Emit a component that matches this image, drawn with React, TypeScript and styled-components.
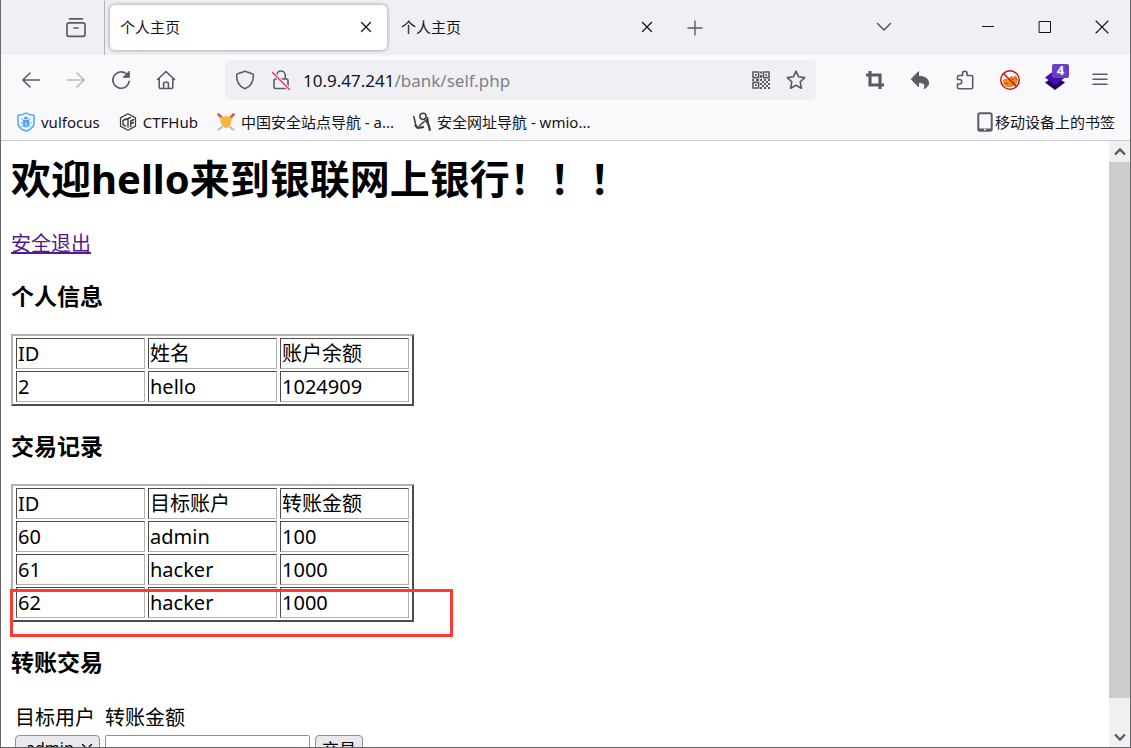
import React from "react";
import styled, { createGlobalStyle, css } from "styled-components";

const ink = "#15141a";
const iconInk = "#5b5b66";

const GlobalStyle = createGlobalStyle`
  *, *::before, *::after { box-sizing: border-box; }
  body { margin: 0; overflow: hidden; }
  body, button, input, select { font-family: "Noto Sans", "Noto Sans CJK SC", sans-serif; }
`;

const Window = styled.div`
  height: 100vh;
  display: flex;
  flex-direction: column;
  border: 1px solid #67676c;
  border-top: 0;
  background: #fff;
  color: ${ink};
`;

const TabBar = styled.header`
  flex: none;
  height: 55px;
  display: flex;
  background: #f0f0f4;
`;

const TabStart = styled.div`
  width: 104px;
  display: flex;
  align-items: center;
  justify-content: flex-end;
  padding-right: 17px;
  border-right: 1px solid #b3b3ba;
`;

const TabList = styled.div`
  display: flex;
  gap: 4px;
  padding: 5px;
`;

const Tab = styled.div<{ $active?: boolean }>`
  width: 277px;
  display: flex;
  align-items: center;
  justify-content: space-between;
  padding: 0 10px 2px;
  border-radius: 5px;
  font-size: 15px;
  line-height: 20px;
  ${(p) =>
    p.$active &&
    css`
      background: #fff;
      box-shadow: 0 0 4px rgba(0, 0, 0, 0.4);
    `}
`;

const IconButton = styled.button<{ $w?: number }>`
  flex: none;
  width: ${(p) => p.$w ?? 22}px;
  padding: 0;
  border: 0;
  background: none;
  color: ${iconInk};
  display: inline-flex;
  align-items: center;
  justify-content: center;
  position: relative;

  &:disabled { opacity: 0.4; }
`;

const CloseButton = styled(IconButton)`
  color: ${ink};
`;

const WindowControls = styled.div`
  margin-left: auto;
  padding-bottom: 2px;
  display: flex;
`;

const NavBar = styled.nav`
  flex: none;
  height: 50px;
  display: flex;
  align-items: center;
  background: #f9f9fb;
  padding: 0 8px 0 7px;
`;

const NavGroup = styled.div`
  display: flex;
  height: 40px;
`;

const AddressBar = styled.div`
  flex: 1;
  display: flex;
  align-items: center;
  height: 40px;
  margin: 0 36px 0 37px;
  padding: 0 3px 0 2px;
  border-radius: 5px;
  background: #f0f0f4;
`;

const Address = styled.a`
  flex: 1;
  margin-left: 4px;
  padding-top: 1px;
  color: #808087;
  font-size: 17px;
  line-height: 24px;
  text-decoration: none;
  white-space: nowrap;
`;

const Host = styled.span`
  color: ${ink};
`;

const Badge = styled.span`
  position: absolute;
  left: 20px;
  top: 4px;
  width: 17px;
  height: 14px;
  border-radius: 2px;
  background: #6b3fbf;
  color: #fff;
  font-size: 13px;
  font-weight: 700;
  line-height: 13px;
`;

const BookmarkBar = styled.div`
  flex: none;
  height: 36px;
  display: flex;
  align-items: center;
  gap: 18px;
  padding: 0 15px 2px;
  background: #f9f9fb;
  border-bottom: 1px solid #cccccf;
`;

const Bookmark = styled.a<{ $end?: boolean }>`
  display: flex;
  align-items: center;
  gap: ${(p) => (p.$end ? 0 : 5)}px;
  margin-left: ${(p) => (p.$end ? "auto" : 0)};
  color: ${ink};
  font-size: 15px;
  line-height: 20px;
  text-decoration: none;
  white-space: nowrap;
`;

const Viewport = styled.div`
  flex: 1;
  min-height: 0;
  display: flex;
`;

const Page = styled.main`
  flex: 1;
  min-width: 0;
  overflow: hidden;
  padding: 10px 10px 0;
  color: #000;
  font-size: 20px;
  line-height: 28px;
`;

const Title = styled.h1`
  margin: 0 0 25px;
  font-size: 40px;
  line-height: 56px;
`;

const LogoutLine = styled.div`
  line-height: 24px;
`;

const LogoutLink = styled.a`
  color: #551a8b;
`;

const Heading = styled.h3`
  margin: 24px 0 22px;
  font-size: 23px;
  line-height: 32px;
`;

const DataTable = styled.table`
  border: 2px solid;
  border-color: #b2b2b2 #4c4c4c #4c4c4c #b2b2b2;
  border-spacing: 3px 2px;

  th, td {
    width: 129px;
    height: 31px;
    padding: 1px 1px 0;
    border: 1px solid;
    border-color: #4c4c4c #b2b2b2 #b2b2b2 #4c4c4c;
    font-weight: 400;
    text-align: left;
    line-height: 28px;
  }
`;

const Marked = styled.div`
  position: relative;
`;

const Highlight = styled.div`
  position: absolute;
  left: -1px;
  bottom: -15px;
  width: 443px;
  height: 48px;
  border: 3px solid #ff3838;
`;

const FormTable = styled.table`
  border-spacing: 3px 2px;

  th, td {
    padding: 1px;
    font-weight: 400;
    text-align: left;
    vertical-align: top;
  }

  th { padding: 2px 1px 0; }
`;

const field = css`
  display: block;
  height: 26px;
  margin: 0;
  border: 1px solid #8f8f9d;
  border-radius: 4px;
  color: #000;
  font-size: 17px;
`;

const SelectBox = styled.div`
  position: relative;
  width: 85px;

  svg { position: absolute; right: 7px; top: 8px; }
`;

const Select = styled.select`
  ${field}
  width: 100%;
  padding: 0 10px;
  appearance: none;
  background: #e9e9ed;
  font-size: 16px;
`;

const AmountInput = styled.input`
  ${field}
  width: 205px;
  border-radius: 2px;
`;

const SubmitButton = styled.button`
  ${field}
  width: 48px;
  padding: 0;
  background: #e9e9ed;
`;

const ScrollBar = styled.div`
  flex: none;
  width: 21px;
  display: flex;
  flex-direction: column;
  background: #f0f0f0;
`;

const ScrollButton = styled(IconButton)`
  width: 21px;
  height: 21px;
`;

const Track = styled.div`
  flex: 1;
`;

const Thumb = styled.div`
  height: 95%;
  background: #cdcdcd;
`;

type IconProps = { size?: number; w?: number; children: React.ReactNode };

const Icon = ({ size = 20, w = 1.6, children }: IconProps) => (
  <svg
    width={size}
    height={size}
    viewBox={`0 0 ${size} ${size}`}
    fill="none"
    stroke="currentColor"
    strokeWidth={w}
    strokeLinecap="round"
    strokeLinejoin="round"
    aria-hidden="true"
  >
    {children}
  </svg>
);

const CrossIcon = () => (
  <Icon size={12} w={1.3}><path d="M1.5 1.5l9 9M10.5 1.5l-9 9" /></Icon>
);

const QrIcon = () => (
  <Icon size={20} w={1.6}>
    <path strokeLinejoin="miter" d="M2 2h5.600v5.600H2zM12.400 2H18v5.600h-5.600zM2 12.400h5.600V18H2z" />
    <path
      stroke="none"
      fill="currentColor"
      d="M4 4h1.800v1.800H4zM14.300 4h1.800v1.800h-1.800zM4 14.300h1.800v1.800H4zM9 1.500h2v2H9zM9 5h2v3H9zM1.200 9h2v2h-2zM5 9h3v2H5zM9 9h2v2H9zM11 11h2v2h-2zM13 9h2v2h-2zM15 11h2v2h-2zM17 9h2v2h-2zM9 13h2v2H9zM13 13h2v2h-2zM17 13h2v2h-2zM11 15h2v2h-2zM15 15h2v2h-2zM9 17h2v2H9zM13 17h2v2h-2zM17 17h2v2h-2z"
    />
  </Icon>
);

const ForbiddenFoxIcon = () => (
  <Icon size={22} w={1.5}>
    <path
      stroke="#9a5a10"
      strokeWidth={0.5}
      fill="#ef8e14"
      d="M4.500 11l3-1 2 .5 3-3.500 1.500 1.500 3-1.500 1.500 4-1.500 4.500-4 2H7.500L4.500 15z"
    />
    <path stroke="#6b4415" strokeWidth={1} d="M13 10l1.500.8M16.500 9.500l1 .8M6.500 14l2.500 1M13 13.800h2.500" />
    <circle cx="11" cy="11" r="9.300" stroke="#d0121b" />
    <path stroke="#d0121b" d="M4.500 4.500l13 13" />
  </Icon>
);

const VulfocusIcon = () => (
  <Icon w={1.5}>
    <g stroke="#4da3f5">
      <path d="M10 1C8 2.500 5 3.200 2 3.200v8c0 3.800 3.600 6.300 8 7.800 4.400-1.500 8-4 8-7.800v-8C15 3.200 12 2.500 10 1z" />
      <path strokeWidth={1} d="M5.500 7l2 1.500M14.500 7l-2 1.500M5 11h10M5.500 14.500l2-1.500M14.500 14.500l-2-1.500" />
      <path stroke="none" fill="#4da3f5" d="M7 8h6v4.500a3 3 0 0 1-6 0zM7.500 7.300a2.500 2.500 0 0 1 5 0z" />
      <path stroke="#f9f9fb" strokeWidth={0.8} d="M10 10.500v4" />
    </g>
  </Icon>
);

const CtfHubIcon = () => (
  <Icon w={1.4}>
    <g stroke="#3c3c40">
      <path d="M10 1.800l7.500 4.100v8.200L10 18.200l-7.500-4.100V5.900z" strokeWidth={1.2} />
      <path d="M8 7L5 8.500v4.200l2.500 1.200M7.800 7.500L12.500 5.500M10 7v8M12.800 14.500V9l3-1.500M13 11.500l2.500-1" />
    </g>
  </Icon>
);

const ShieldSwordsIcon = () => (
  <Icon w={1.8}>
    <path stroke="#b9bcc6" d="M4 4l12 13M16 4L4 17" />
    <path stroke="#e5533f" strokeWidth={2.600} d="M2.500 2.500l3 3M17.500 2.500l-3 3" />
    <path stroke="#b3b6c2" strokeWidth={1.500} d="M2 18l3-2.500M18 18l-3-2.500" />
    <path stroke="none" fill="#f6b73c" d="M10 3.500C8.500 5 6.500 5.300 4.500 5.300c-.5 5.500 1 9.200 5.500 11.200 4.500-2 6-5.700 5.500-11.200-2 0-4-.3-5.500-1.800z" />
  </Icon>
);

const NinjaIcon = () => (
  <Icon w={1.5}>
    <g stroke="#3c3c3c">
      <circle cx="11" cy="4.300" r="3.100" />
      <path d="M1.800 4.500L4 14M15.500 5.500l.8 6" />
      <path strokeWidth={2.200} d="M3.500 13.500l2 2.300 5.500-.6M14.500 8.500l2.300 5 1 4.500" />
      <path d="M7.500 13.500L10.500 11l4.500-3.500" />
    </g>
  </Icon>
);

const PhoneIcon = () => (
  <Icon w={2}>
    <g stroke={iconInk}>
      <path d="M5 1.200h10a1.700 1.700 0 0 1 1.700 1.700v14.200a1.700 1.700 0 0 1-1.700 1.700H5a1.700 1.700 0 0 1-1.700-1.700V2.900A1.700 1.700 0 0 1 5 1.200z" />
      <path strokeLinecap="butt" d="M4 17.500h12" />
      <path stroke="#fff" strokeWidth={1.200} d="M9.500 17.700h1" />
    </g>
  </Icon>
);

const profile = {
  head: ["ID", "姓名", "账户余额"],
  rows: [["2", "hello", "1024909"]],
};

const records = {
  head: ["ID", "目标账户", "转账金额"],
  rows: [
    ["60", "admin", "100"],
    ["61", "hacker", "1000"],
    ["62", "hacker", "1000"],
  ],
};

const Grid = ({ head, rows }: { head: string[]; rows: string[][] }) => (
  <DataTable>
    <thead>
      <tr>{head.map((h) => <th key={h} scope="col">{h}</th>)}</tr>
    </thead>
    <tbody>
      {rows.map((r) => (
        <tr key={r[0]}>{r.map((c, i) => <td key={i}>{c}</td>)}</tr>
      ))}
    </tbody>
  </DataTable>
);

export default function App() {
  return (
    <Window>
      <GlobalStyle />
      <TabBar>
        <TabStart>
          <IconButton aria-label="Recent browsing">
            <Icon size={22} w={1.7}>
              <path d="M4.500 1.800h13M4 5.800h14a2 2 0 0 1 2 2v9.500a2 2 0 0 1-2 2H4a2 2 0 0 1-2-2V7.800a2 2 0 0 1 2-2zM9 11h4" />
            </Icon>
          </IconButton>
        </TabStart>
        <TabList>
          <Tab $active>
            个人主页
            <CloseButton aria-label="Close tab"><CrossIcon /></CloseButton>
          </Tab>
          <Tab>
            个人主页
            <CloseButton aria-label="Close tab"><CrossIcon /></CloseButton>
          </Tab>
        </TabList>
        <IconButton $w={44} aria-label="New tab">
          <Icon size={16} w={1.4}><path d="M8 1v14M1 8h14" /></Icon>
        </IconButton>
        <WindowControls>
          <IconButton $w={151} aria-label="List all tabs">
            <Icon size={16} w={1.6}><path d="M1.500 4.500L8 11l6.500-6.500" /></Icon>
          </IconButton>
          <CloseButton $w={57} aria-label="Minimize">
            <Icon size={14} w={1}><path strokeLinecap="butt" d="M1 6.500h12" /></Icon>
          </CloseButton>
          <CloseButton $w={57} aria-label="Maximize">
            <Icon size={14} w={1}><path strokeLinejoin="miter" d="M1.500 1.500h11v11h-11z" /></Icon>
          </CloseButton>
          <CloseButton $w={57} aria-label="Close window">
            <Icon size={14} w={1.1}><path d="M1 1l12 12M13 1L1 13" /></Icon>
          </CloseButton>
        </WindowControls>
      </TabBar>

      <NavBar>
        <NavGroup>
          <IconButton $w={45} aria-label="Back">
            <Icon><path d="M18.500 10H1.800M9 3L1.800 10 9 17" /></Icon>
          </IconButton>
          <IconButton $w={45} aria-label="Forward" disabled>
            <Icon><path d="M1.500 10h16.700M11 3l7.200 7-7.200 7" /></Icon>
          </IconButton>
          <IconButton $w={45} aria-label="Reload">
            <Icon>
              <path d="M18.200 11.200A8.200 8.200 0 1 1 15.600 4" />
              <path fill="currentColor" strokeWidth={1} d="M18.300 1.500v5.800h-5.800z" />
            </Icon>
          </IconButton>
          <IconButton $w={45} aria-label="Home">
            <Icon>
              <path d="M1.500 9.500L10 1.500l8.500 8M3.200 8.500V17a1.500 1.500 0 0 0 1.500 1.500h10.600a1.500 1.500 0 0 0 1.500-1.500V8.500M7.600 18v-4.500a1.200 1.200 0 0 1 1.200-1.200h2.400a1.200 1.200 0 0 1 1.200 1.200V18" />
            </Icon>
          </IconButton>
        </NavGroup>
        <AddressBar>
          <IconButton $w={36} aria-label="Tracking protection">
            <Icon><path d="M10 1.200l7.200 2.600c.8.300 1.200.8 1.200 1.600 0 6-2.400 11-8.400 13.400C4 16.400 1.600 11.400 1.600 5.400c0-.8.400-1.300 1.200-1.600z" /></Icon>
          </IconButton>
          <IconButton $w={36} aria-label="Connection not secure">
            <Icon>
              <path d="M5.800 8.500V5.200a4.200 4.200 0 0 1 8.400 0v3.300M4.500 9h11A1.500 1.500 0 0 1 17 10.500V17a1.500 1.500 0 0 1-1.500 1.500h-11A1.500 1.500 0 0 1 3 17v-6.500A1.500 1.500 0 0 1 4.500 9z" />
              <path stroke="#f0f0f4" strokeWidth={3.600} d="M2 3l16 16" />
              <path stroke="#f23a68" d="M1.500 2.500l17 17" />
            </Icon>
          </IconButton>
          <Address href="#"><Host>10.9.47.241</Host>/bank/self.php</Address>
          <IconButton $w={35} aria-label="QR code"><QrIcon /></IconButton>
          <IconButton $w={35} aria-label="Bookmark this page">
            <Icon><path d="M10 1.200l2.600 5.600 6.100.8-4.500 4.200 1.200 6.400L10 15.200l-5.400 3 1.200-6.400L1.300 7.600l6.100-.8z" /></Icon>
          </IconButton>
        </AddressBar>
        <NavGroup>
          <IconButton $w={45} aria-label="Screenshot">
            <Icon w={3.200}><path strokeLinecap="butt" strokeLinejoin="miter" d="M1 5h14v14M5 1v14h14" /></Icon>
          </IconButton>
          <IconButton $w={45} aria-label="Undo">
            <Icon w={1}><path fill="currentColor" d="M8.500 2v4.300c6.500 0 10 2.700 10 6.700 0 2.500-1.500 4.500-4.500 5.500 2-3.500.5-6-5.500-6v4.300L1.500 9.300z" /></Icon>
          </IconButton>
          <IconButton $w={45} aria-label="Extensions">
            <Icon>
              <path d="M7.500 5.500V3.500a2.300 2.300 0 0 1 4.600 0v2h4.100a1.500 1.500 0 0 1 1.500 1.500v10.200a1.500 1.500 0 0 1-1.500 1.500H4a1.500 1.500 0 0 1-1.500-1.500V14h2a2.200 2.200 0 0 0 0-4.500h-2V7A1.500 1.500 0 0 1 4 5.500z" />
            </Icon>
          </IconButton>
          <IconButton $w={45} aria-label="Cookie blocker"><ForbiddenFoxIcon /></IconButton>
          <IconButton $w={45} aria-label="Layers">
            <Icon size={20}>
              <path stroke="none" fill="#1c0068" d="M0 12.500L10 6l10 6.500-10 7.500z" />
              <path stroke="none" fill="#4a0ab0" d="M0 7.500L10 0l10 7.500L10 15z" />
            </Icon>
            <Badge>4</Badge>
          </IconButton>
          <IconButton $w={45} aria-label="Menu">
            <Icon w={1.500}><path d="M3 4.300h14M3 9.300h14M3 14.300h14" /></Icon>
          </IconButton>
        </NavGroup>
      </NavBar>

      <BookmarkBar>
        <Bookmark href="#"><VulfocusIcon />vulfocus</Bookmark>
        <Bookmark href="#"><CtfHubIcon />CTFHub</Bookmark>
        <Bookmark href="#"><ShieldSwordsIcon />中国安全站点导航 - a...</Bookmark>
        <Bookmark href="#"><NinjaIcon />安全网址导航 - wmio...</Bookmark>
        <Bookmark href="#" $end><PhoneIcon />移动设备上的书签</Bookmark>
      </BookmarkBar>

      <Viewport>
        <Page>
          <Title>欢迎hello来到银联网上银行！！！</Title>
          <LogoutLine><LogoutLink href="#">安全退出</LogoutLink></LogoutLine>
          <Heading>个人信息</Heading>
          <Grid {...profile} />
          <Heading>交易记录</Heading>
          <Marked>
            <Grid {...records} />
            <Highlight />
          </Marked>
          <Heading>转账交易</Heading>
          <FormTable>
            <tbody>
              <tr>
                <th scope="col"><label htmlFor="target">目标用户</label></th>
                <th scope="col"><label htmlFor="amount">转账金额</label></th>
              </tr>
              <tr>
                <td>
                  <SelectBox>
                    <Select id="target" defaultValue="admin">
                      <option>admin</option>
                      <option>hacker</option>
                    </Select>
                    <Icon size={12} w={1.3}><path d="M1.500 1.500L6 6l4.500-4.500" /></Icon>
                  </SelectBox>
                </td>
                <td><AmountInput id="amount" type="text" /></td>
                <td><SubmitButton>交易</SubmitButton></td>
              </tr>
            </tbody>
          </FormTable>
        </Page>
        <ScrollBar>
          <ScrollButton aria-label="Scroll up">
            <Icon size={12} w={2.400}><path strokeLinecap="butt" strokeLinejoin="miter" d="M1 8.500l5-5 5 5" /></Icon>
          </ScrollButton>
          <Track><Thumb /></Track>
          <ScrollButton aria-label="Scroll down">
            <Icon size={12} w={2.400}><path strokeLinecap="butt" strokeLinejoin="miter" d="M1 3.500l5 5 5-5" /></Icon>
          </ScrollButton>
        </ScrollBar>
      </Viewport>
    </Window>
  );
}
